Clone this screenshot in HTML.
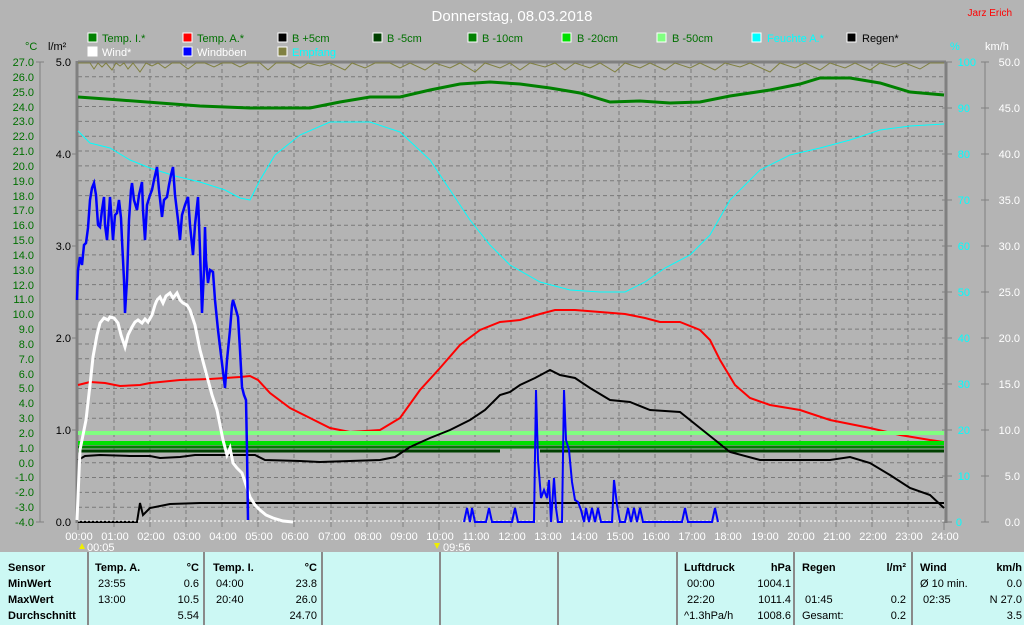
<!DOCTYPE html>
<html><head><meta charset="utf-8"><style>
body{margin:0;width:1024px;height:625px;overflow:hidden;background:#b4b4b4;font-family:"Liberation Sans",sans-serif}
svg{position:absolute;left:0;top:0}
.tbl{position:absolute;left:0;top:552px;width:1024px;height:73px;background:#ccf8f4;font-size:11px;color:#000}
.c{position:absolute;top:0;height:73px;border-right:2px solid #8a8a8a}
.r{position:absolute;white-space:nowrap}
b{font-weight:bold}
</style></head><body>
<svg width="1024" height="552" font-family="Liberation Sans, sans-serif" font-size="11">
<text x="512" y="21" fill="#fff" font-size="15" text-anchor="middle">Donnerstag, 08.03.2018</text>
<text x="1012" y="16" fill="#f00" font-size="10" text-anchor="end">Jarz Erich</text>
<g font-size="11">
<rect x="88" y="33" width="9" height="9" fill="#008000" stroke="#fff"/><text x="102" y="42" fill="#007000">Temp. I.*</text>
<rect x="183" y="33" width="9" height="9" fill="#f00" stroke="#fff"/><text x="197" y="42" fill="#007000">Temp. A.*</text>
<rect x="278" y="33" width="9" height="9" fill="#000" stroke="#fff"/><text x="292" y="42" fill="#007000">B +5cm</text>
<rect x="373" y="33" width="9" height="9" fill="#004000" stroke="#fff"/><text x="387" y="42" fill="#007000">B -5cm</text>
<rect x="468" y="33" width="9" height="9" fill="#008000" stroke="#fff"/><text x="482" y="42" fill="#007000">B -10cm</text>
<rect x="562" y="33" width="9" height="9" fill="#00e000" stroke="#fff"/><text x="577" y="42" fill="#007000">B -20cm</text>
<rect x="657" y="33" width="9" height="9" fill="#80ff80" stroke="#fff"/><text x="672" y="42" fill="#007000">B -50cm</text>
<rect x="752" y="33" width="9" height="9" fill="#0ff" stroke="#fff"/><text x="767" y="42" fill="#0ff">Feuchte A.*</text>
<rect x="847" y="33" width="9" height="9" fill="#000" stroke="#fff"/><text x="862" y="42" fill="#000">Regen*</text>
<rect x="88" y="47" width="9" height="9" fill="#fff" stroke="#fff"/><text x="102" y="56" fill="#fff">Wind*</text>
<rect x="183" y="47" width="9" height="9" fill="#00f" stroke="#fff"/><text x="197" y="56" fill="#fff">Windböen</text>
<rect x="278" y="47" width="9" height="9" fill="#808040" stroke="#fff"/><text x="292" y="56" fill="#0ff">Empfang</text>
</g>
<text x="25" y="50" fill="#007000">°C</text><text x="48" y="50" fill="#000">l/m²</text>
<text x="950" y="50" fill="#0ff">%</text><text x="985" y="50" fill="#fff">km/h</text>
<g stroke="#7a7a7a" stroke-dasharray="4,3" stroke-width="1">
<path d="M114 62V522M150 62V522M186 62V522M222 62V522M258 62V522M294 62V522M331 62V522M367 62V522M403 62V522M439 62V522M475 62V522M511 62V522M547 62V522M583 62V522M619 62V522M655 62V522M691 62V522M727 62V522M764 62V522M800 62V522M836 62V522M872 62V522M908 62V522"/>
<path d="M78 76.8H944M78 91.7H944M78 106.5H944M78 121.4H944M78 136.2H944M78 151H944M78 165.9H944M78 180.7H944M78 195.6H944M78 210.4H944M78 225.2H944M78 240.1H944M78 254.9H944M78 269.8H944M78 284.6H944M78 299.4H944M78 314.3H944M78 329.1H944M78 344H944M78 358.8H944M78 373.6H944M78 388.5H944M78 403.3H944M78 418.2H944M78 433H944M78 447.8H944M78 462.7H944M78 477.5H944M78 492.4H944M78 507.2H944"/>
</g>
<g stroke="#808080" fill="none">
<path d="M40 62V522M36 62H44M36 522H44" />
<path d="M77 61V523M78 62H946M946 62V523" stroke-width="3"/>
<path d="M985 62V522"/>
<path d="M981 62H989M981 108H989M981 154H989M981 200H989M981 246H989M981 292H989M981 338H989M981 384H989M981 430H989M981 476H989M981 522H989"/>
<path d="M942 62H952M942 108H952M942 154H952M942 200H952M942 246H952M942 292H952M942 338H952M942 384H952M942 430H952M942 476H952M942 522H952"/>
<path d="M72 154H78M72 246H78M72 338H78M72 430H78"/>
<path d="M78 522V530M114 522V527M150 522V527M186 522V527M222 522V527M258 522V527M294 522V527M331 522V527M367 522V527M403 522V527M439 522V530M475 522V527M511 522V527M547 522V527M583 522V527M619 522V527M655 522V527M691 522V527M727 522V527M764 522V527M800 522V527M836 522V527M872 522V527M908 522V527M944 522V530"/>
</g>
<g fill="#007000" text-anchor="end" font-size="11">
<text x="34" y="66">27.0</text><text x="34" y="81">26.0</text><text x="34" y="96">25.0</text><text x="34" y="111">24.0</text><text x="34" y="125">23.0</text><text x="34" y="140">22.0</text><text x="34" y="155">21.0</text><text x="34" y="170">20.0</text><text x="34" y="185">19.0</text><text x="34" y="200">18.0</text><text x="34" y="214">17.0</text><text x="34" y="229">16.0</text><text x="34" y="244">15.0</text><text x="34" y="259">14.0</text><text x="34" y="274">13.0</text><text x="34" y="289">12.0</text><text x="34" y="303">11.0</text><text x="34" y="318">10.0</text><text x="34" y="333">9.0</text><text x="34" y="348">8.0</text><text x="34" y="363">7.0</text><text x="34" y="378">6.0</text><text x="34" y="392">5.0</text><text x="34" y="407">4.0</text><text x="34" y="422">3.0</text><text x="34" y="437">2.0</text><text x="34" y="452">1.0</text><text x="34" y="467">0.0</text><text x="34" y="481">-1.0</text><text x="34" y="496">-2.0</text><text x="34" y="511">-3.0</text><text x="34" y="526">-4.0</text>
</g>
<g fill="#000" text-anchor="end"><text x="71" y="66">5.0</text><text x="71" y="158">4.0</text><text x="71" y="250">3.0</text><text x="71" y="342">2.0</text><text x="71" y="434">1.0</text><text x="71" y="526">0.0</text></g>
<g fill="#0ff" text-anchor="end"><text x="976" y="66">100</text><text x="970" y="112">90</text><text x="970" y="158">80</text><text x="970" y="204">70</text><text x="970" y="250">60</text><text x="970" y="296">50</text><text x="970" y="342">40</text><text x="970" y="388">30</text><text x="970" y="434">20</text><text x="970" y="480">10</text><text x="962" y="526">0</text></g>
<g fill="#fff" text-anchor="end"><text x="1020" y="66">50.0</text><text x="1020" y="112">45.0</text><text x="1020" y="158">40.0</text><text x="1020" y="204">35.0</text><text x="1020" y="250">30.0</text><text x="1020" y="296">25.0</text><text x="1020" y="342">20.0</text><text x="1020" y="388">15.0</text><text x="1020" y="434">10.0</text><text x="1020" y="480">5.0</text><text x="1020" y="526">0.0</text></g>
<g fill="#fff" text-anchor="middle"><text x="79" y="540">00:00</text><text x="115" y="540">01:00</text><text x="151" y="540">02:00</text><text x="187" y="540">03:00</text><text x="223" y="540">04:00</text><text x="259" y="540">05:00</text><text x="295" y="540">06:00</text><text x="332" y="540">07:00</text><text x="368" y="540">08:00</text><text x="404" y="540">09:00</text><text x="440" y="540">10:00</text><text x="476" y="540">11:00</text><text x="512" y="540">12:00</text><text x="548" y="540">13:00</text><text x="584" y="540">14:00</text><text x="620" y="540">15:00</text><text x="656" y="540">16:00</text><text x="692" y="540">17:00</text><text x="728" y="540">18:00</text><text x="765" y="540">19:00</text><text x="801" y="540">20:00</text><text x="837" y="540">21:00</text><text x="873" y="540">22:00</text><text x="909" y="540">23:00</text><text x="945" y="540">24:00</text></g>
<text x="87" y="551" fill="#fff">00:05</text><path d="M79 549l3-6 3 6z" fill="#ee0"/>
<text x="443" y="551" fill="#fff">09:56</text><path d="M434 543l3 6 3-6z" fill="#ee0"/>
<polyline fill="none" stroke="#808040" points="78,63 90,63 94,69 98,63 102,67 106,63 112,70 116,63 120,66 124,63 128,69 133,63 140,72 146,63 152,66 158,63 165,68 172,63 180,63 188,69 196,63 205,63 214,67 222,63 232,63 240,67 248,63 260,63 268,70 276,63 290,63 300,68 308,63 320,66 330,63 345,70 352,63 365,68 375,63 390,63 400,68 410,63 425,70 435,63 450,68 460,63 475,72 485,63 500,68 510,63 520,70 530,63 545,67 555,63 565,70 575,63 590,68 600,63 615,72 625,63 640,68 650,63 665,70 675,63 690,68 700,63 715,70 725,63 740,67 750,63 770,72 780,63 795,68 805,63 820,70 830,63 845,68 855,63 870,70 880,63 895,67 905,63 920,69 930,63 944,63"/>
<polyline fill="none" stroke="#008000" stroke-width="3" points="78,97 120,100 160,103 200,106 250,108 310,108 340,102 370,97 400,97 430,90 460,84 490,82 520,84 550,88 580,93 610,102 640,101 670,103 700,102 730,96 770,90 800,84 820,78 850,78 880,83 910,92 944,95"/>
<polyline fill="none" stroke="#0ff" stroke-width="1" points="78,131 90,143 110,148 130,160 150,168 175,176 200,182 225,190 240,198 250,200 260,180 275,155 300,135 330,122 370,122 400,132 430,160 450,190 470,220 490,245 510,265 540,282 570,290 600,292 625,292 645,282 665,268 690,255 710,235 730,200 760,170 790,155 820,148 850,140 880,130 910,126 944,124"/>
<polyline fill="none" stroke="#f00" stroke-width="2" points="78,385 90,382 105,383 120,386 140,385 150,383 180,380 210,379 240,377 250,376 258,380 270,393 290,408 310,418 330,428 350,432 380,430 400,418 420,390 440,368 460,345 480,330 500,322 520,320 540,314 555,310 575,310 600,312 625,314 645,318 660,322 680,322 700,330 710,340 720,360 735,385 750,398 770,405 800,410 830,420 850,424 870,428 900,435 930,440 944,442"/>
<path fill="none" stroke="#80ff80" stroke-width="4" d="M78 433H944"/>
<path fill="none" stroke="#00e000" stroke-width="4" d="M78 443H944"/>
<path fill="none" stroke="#008000" stroke-width="3" d="M78 447H944"/>
<path fill="none" stroke="#004000" stroke-width="3" d="M78 451H500M540 451H944"/>
<polyline fill="none" stroke="#000" stroke-width="2" points="78,460 85,456 100,455 130,456 150,456 160,458 180,457 195,455 210,455 240,455 255,455 265,460 300,461 320,462 350,461 380,460 395,457 410,447 430,438 450,430 470,420 485,410 500,395 510,392 520,385 535,378 550,370 560,375 575,378 590,388 610,400 630,402 650,410 680,412 690,420 700,428 715,440 730,452 760,460 800,460 830,460 850,457 870,463 890,475 910,488 930,495 944,508"/>
<polyline fill="none" stroke="#000" stroke-width="2" points="78,522 137,522 140,503 143,515 150,508 170,504 200,503 944,503"/>
<path d="M78 521H944" stroke="#fff" stroke-width="1" stroke-dasharray="2,2"/>
<polyline fill="none" stroke="#fff" stroke-width="3" points="77,520 80,450 86,420 90,385 93,357 97,335 100,323 104,318 108,320 110,317 114,318 118,323 121,335 125,347 128,335 132,327 135,322 138,320 142,323 145,319 148,322 152,315 155,305 157,300 160,297 163,303 166,296 170,293 173,298 177,293 180,300 183,303 187,305 190,310 195,325 200,350 204,365 208,380 212,395 217,410 220,425 223,440 227,455 230,448 233,463 237,468 242,473 246,485 250,497 255,505 260,510 266,515 273,518 283,521 293,522"/>
<polyline fill="none" stroke="#00f" stroke-width="2.5" points="77,300 78,270 80,257 82,265 84,245 86,243 88,228 90,200 92,188 94,183 96,195 98,225 100,227 102,210 104,197 105,225 107,240 109,212 110,197 112,225 113,240 115,215 117,213 119,200 121,218 122,240 124,280 125,313 127,280 129,220 131,190 132,183 134,200 137,210 139,195 142,182 143,210 145,240 147,205 150,195 152,190 154,180 157,167 159,190 162,217 164,200 167,197 169,185 171,175 173,167 175,195 178,220 180,240 182,215 185,205 188,197 190,225 193,255 195,225 198,197 200,250 202,313 204,270 205,227 206,260 208,283 210,270 213,272 215,300 218,330 221,355 225,388 227,360 230,330 232,305 233,300 236,310 238,317 240,350 242,387 244,395 246,400 247,450 248,520"/>
<polyline fill="none" stroke="#00f" stroke-width="2" points="464,522 467,508 470,522 472,508 475,522 486,522 489,508 492,522 512,522 515,508 518,522 534,522 536,390 538,460 541,498 544,490 547,498 549,480 551,522 554,478 556,508 558,522 562,522 564,390 566,440 569,450 572,482 575,500 578,502 581,510 584,522 586,508 589,522 592,508 595,522 598,508 601,522 612,522 614,480 617,505 620,522 625,522 628,508 631,522 634,508 637,522 640,508 643,522 682,522 685,508 688,522 712,522 715,508 718,522"/>
</svg>
<div class="tbl">
<div class="c" style="left:0;width:87px"></div>
<div class="c" style="left:89px;width:114px"></div>
<div class="c" style="left:207px;width:114px"></div>
<div class="c" style="left:325px;width:114px"></div>
<div class="c" style="left:443px;width:114px"></div>
<div class="c" style="left:561px;width:115px"></div>
<div class="c" style="left:680px;width:113px"></div>
<div class="c" style="left:797px;width:114px"></div>
<div class="r" style="left:8px;top:8px;line-height:16px"><b>Sensor</b><br><b>MinWert</b><br><b>MaxWert</b><br><b>Durchschnitt</b></div>
<div class="r" style="left:95px;top:8px;line-height:16px"><b>Temp. A.</b><br>&nbsp;23:55<br>&nbsp;13:00</div>
<div class="r" style="left:150px;top:8px;width:49px;text-align:right;line-height:16px"><b>°C</b><br>0.6<br>10.5<br>5.54</div>
<div class="r" style="left:213px;top:8px;line-height:16px"><b>Temp. I.</b><br>&nbsp;04:00<br>&nbsp;20:40</div>
<div class="r" style="left:268px;top:8px;width:49px;text-align:right;line-height:16px"><b>°C</b><br>23.8<br>26.0<br>24.70</div>
<div class="r" style="left:684px;top:8px;line-height:16px"><b>Luftdruck</b><br>&nbsp;00:00<br>&nbsp;22:20<br>^1.3hPa/h</div>
<div class="r" style="left:730px;top:8px;width:61px;text-align:right;line-height:16px"><b>hPa</b><br>1004.1<br>1011.4<br>1008.6</div>
<div class="r" style="left:802px;top:8px;line-height:16px"><b>Regen</b><br>&nbsp;<br>&nbsp;01:45<br>Gesamt:</div>
<div class="r" style="left:850px;top:8px;width:56px;text-align:right;line-height:16px"><b>l/m²</b><br>&nbsp;<br>0.2<br>0.2</div>
<div class="r" style="left:920px;top:8px;line-height:16px"><b>Wind</b><br>Ø 10 min.<br>&nbsp;02:35</div>
<div class="r" style="left:960px;top:8px;width:62px;text-align:right;line-height:16px"><b>km/h</b><br>0.0<br>N 27.0<br>3.5</div>
</div>
</body></html>
